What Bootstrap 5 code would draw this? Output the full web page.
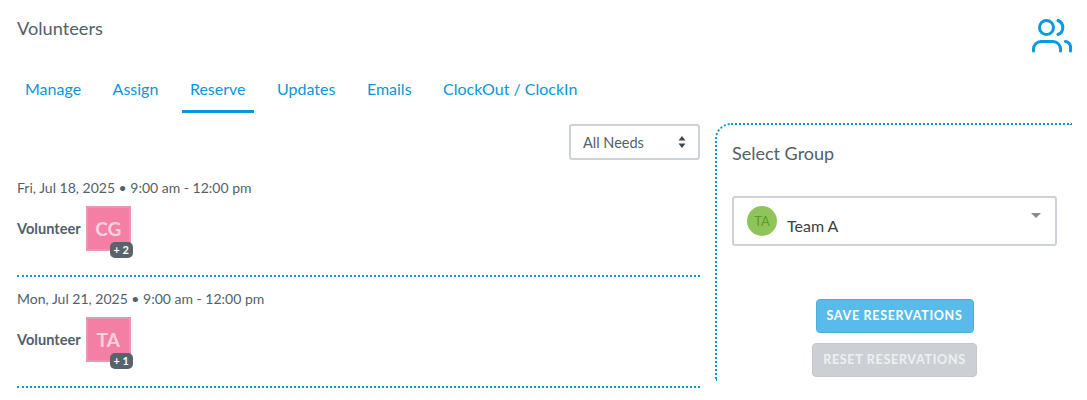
<!DOCTYPE html>
<html lang="en">
<head>
    <meta charset="UTF-8">
    <meta name="viewport" content="width=device-width, initial-scale=1.0">
    <title>Volunteers</title>
    <link href="https://cdn.jsdelivr.net/npm/bootstrap@5.3.0/dist/css/bootstrap.min.css" rel="stylesheet">
    <style>
        body {
            font-family: Lato, "Liberation Sans", sans-serif;
            color: #535f69;
            background: #fff;
            overflow: hidden;
        }
        .page-wrap {
            padding: 0 15px 0 17px;
        }
        .page-head {
            height: 66px;
            padding-top: 17px;
        }
        .page-title {
            font-size: 18.200px;
            line-height: 22px;
            font-weight: 400;
            margin: 0;
        }
        .head-icon {
            margin-top: 2px;
            color: #0a9ade;
        }
        .tab-bar {
            gap: 15.500px;
            height: 47px;
        }
        .tab-bar .nav-link {
            padding: 12px 8px 0;
            height: 47px;
            font-size: 16px;
            line-height: 22px;
            color: #0a96d9;
            border-bottom: 3px solid transparent;
        }
        .tab-bar .nav-link.active {
            border-bottom-color: #0a96d9;
        }
        .main-area {
            padding-top: 10px;
        }
        .left-col {
            width: 683px;
        }
        .needs-bar {
            padding-top: 1px;
        }
        .needs-select {
            width: 131px;
            height: 36px;
            font-size: 14.500px;
            color: #535f69;
            padding: 0 12px;
            border: 2px solid #ccd1da;
            border-radius: 3px;
            background: #fff;
        }
        .needs-label {
            padding-top: 2px;
        }
        .shift-row {
            height: 111px;
            border-bottom: 2px dotted #0a96d9;
            padding-top: 13px;
        }
        .shift-row.first-row {
            height: 117px;
            padding-top: 19px;
        }
        .shift-date {
            font-size: 14px;
            line-height: 18px;
        }
        .slot-line {
            margin-top: 9px;
            gap: 5px;
        }
        .role-name {
            font-size: 14.600px;
            font-weight: 700;
        }
        .slot-box {
            width: 45px;
            height: 45px;
            padding-top: 2px;
            background: #f47fa4;
            border: 2px solid #e996b1;
            color: #fcd3e0;
            font-size: 19px;
            font-weight: 700;
        }
        .slot-count {
            position: absolute;
            right: -4px;
            bottom: -9px;
            width: 23px;
            height: 16px;
            border-radius: 5px;
            background: #58636c;
            color: #fff;
            font-size: 11px;
            font-weight: 700;
            line-height: 16px;
            text-align: center;
        }
        .group-panel {
            margin-left: 15px;
            width: 357px;
            height: 258px;
            border-top: 2px dotted #0a96d9;
            border-left: 2px dotted #0a96d9;
            border-top-left-radius: 16px;
            padding: 16px 0 0 15px;
        }
        .panel-title {
            font-size: 18px;
            line-height: 24px;
            font-weight: 400;
            margin: 0 0 31px;
        }
        .group-select {
            width: 325px;
            height: 50px;
            border: 2px solid #ccd1da;
            border-radius: 3px;
            padding-left: 13px;
        }
        .group-dot {
            width: 30px;
            height: 30px;
            border-radius: 50%;
            background: #8fc45a;
            color: #5c9a2a;
            font-size: 13px;
            line-height: 30px;
            text-align: center;
        }
        .group-name {
            font-size: 16px;
            color: #3a3f45;
            margin-left: 10px;
            padding-top: 9px;
        }
        .caret-down {
            position: absolute;
            right: 14px;
            top: 15px;
            border-left: 5px solid transparent;
            border-right: 5px solid transparent;
            border-top: 5px solid #8a8a8a;
        }
        .action-stack {
            width: 325px;
            margin-top: 53px;
            gap: 10px;
        }
        .action-btn {
            height: 34px;
            padding: 0;
            font-size: 12.500px;
            font-weight: 700;
            letter-spacing: 0.7px;
            color: #fff;
            border-radius: 4px;
        }
        .save-btn {
            width: 158px;
            background: #58bbea;
            border: 1px solid #4faed9;
        }
        .reset-btn {
            width: 165px;
            background: #ccd0d4;
            border: 1px solid #c3c8cd;
            color: #eef0f2;
        }
    </style>
</head>
<body>
    <div class="page-wrap">
        <!-- header -->
        <div class="page-head d-flex justify-content-between align-items-start">
            <h1 class="page-title">Volunteers</h1>
            <svg class="head-icon" width="40" height="34" viewBox="0 0 40 34" fill="none" stroke="currentColor" stroke-width="3" stroke-linecap="round">
                <circle cx="14.5" cy="8.500" r="7"/>
                <path d="M26 1.500a7.500 7.500 0 0 1 0 14"/>
                <path d="M1.500 32v-2a7.500 7.500 0 0 1 7.500-7.500h12a7.500 7.500 0 0 1 7.500 7.500v2"/>
                <path d="M33.500 22.500a5.500 5.500 0 0 1 5 6V32"/>
            </svg>
        </div>

        <!-- tabs -->
        <nav class="nav tab-bar">
            <a class="nav-link" href="#">Manage</a>
            <a class="nav-link" href="#">Assign</a>
            <a class="nav-link active" href="#">Reserve</a>
            <a class="nav-link" href="#">Updates</a>
            <a class="nav-link" href="#">Emails</a>
            <a class="nav-link" href="#">ClockOut / ClockIn</a>
        </nav>

        <div class="main-area d-flex align-items-start">
            <div class="left-col">
                <div class="needs-bar d-flex justify-content-end">
                    <div class="needs-select d-flex align-items-center justify-content-between">
                        <span class="needs-label">All Needs</span>
                        <svg width="8" height="12" viewBox="0 0 8 12" fill="#3f474e"><path d="M4 0l3.500 4.500h-7zM4 12L.5 7.500h7z"/></svg>
                    </div>
                </div>

                <div class="shift-row first-row">
                    <div class="shift-date">Fri, Jul 18, 2025 • 9:00 am - 12:00 pm</div>
                    <div class="slot-line d-flex align-items-center">
                        <span class="role-name">Volunteer</span>
                        <div class="slot-box position-relative d-flex align-items-center justify-content-center">
                            CG
                            <span class="slot-count">+ 2</span>
                        </div>
                    </div>
                </div>

                <div class="shift-row">
                    <div class="shift-date">Mon, Jul 21, 2025 • 9:00 am - 12:00 pm</div>
                    <div class="slot-line d-flex align-items-center">
                        <span class="role-name">Volunteer</span>
                        <div class="slot-box position-relative d-flex align-items-center justify-content-center">
                            TA
                            <span class="slot-count">+ 1</span>
                        </div>
                    </div>
                </div>
            </div>

            <div class="group-panel">
                <h2 class="panel-title">Select Group</h2>
                <div class="group-select position-relative d-flex align-items-center">
                    <div class="group-dot">TA</div>
                    <div class="group-name">Team A</div>
                    <span class="caret-down"></span>
                </div>
                <div class="action-stack d-flex flex-column align-items-center">
                    <button type="button" class="btn action-btn save-btn">SAVE RESERVATIONS</button>
                    <button type="button" class="btn action-btn reset-btn">RESET RESERVATIONS</button>
                </div>
            </div>
        </div>
    </div>
</body>
</html>
